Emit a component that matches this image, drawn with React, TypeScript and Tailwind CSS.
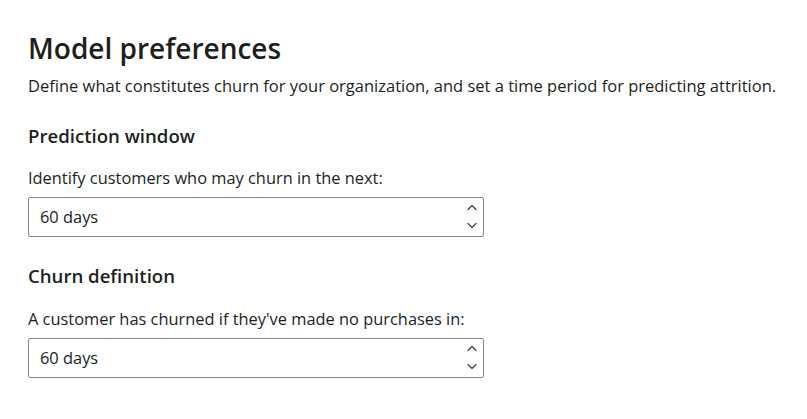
import React from "react";

function Chevrons() {
  return (
    <svg width="10" height="26" viewBox="0 0 10 26" fill="none" stroke="#444" strokeWidth="1.3" strokeLinecap="round" strokeLinejoin="round">
      <path d="M1 5.5 L5 1.5 L9 5.5" />
      <path d="M1 19.5 L5 23.5 L9 19.5" />
    </svg>
  );
}

function SelectBox({ value }: { value: string }) {
  return (
    <div className="w-[456px] h-[40px] border border-[#8a8886] rounded-[2px] flex items-center justify-between pl-[11px] pr-[6px] bg-white">
      <span className="text-[16.4px] text-[#201f1e]">{value}</span>
      <Chevrons />
    </div>
  );
}

export default function App() {
  return (
    <div className="w-[807px] h-[419px] bg-white pl-[28px] pt-[28px]" style={{ fontFamily: '"Open Sans", "Noto Sans", sans-serif' }}>
      <h1 className="text-[28px] font-semibold text-[#201f1e] leading-[40px]">Model preferences</h1>
      <p className="text-[16.5px] text-[#201f1e] leading-[22px] mt-[7px] whitespace-nowrap">
        Define what constitutes churn for your organization, and set a time period for predicting attrition.
      </p>
      <h2 className="text-[18.6px] font-semibold text-[#201f1e] leading-[24px] mt-[27px]">Prediction window</h2>
      <p className="text-[16.4px] text-[#201f1e] leading-[22px] mt-[19px]">Identify customers who may churn in the next:</p>
      <div className="mt-[8px]">
        <SelectBox value="60 days" />
      </div>
      <h2 className="text-[18.6px] font-semibold text-[#201f1e] leading-[24px] mt-[27px]">Churn definition</h2>
      <p className="text-[16.4px] text-[#201f1e] leading-[22px] mt-[20px]">A customer has churned if they've made no purchases in:</p>
      <div className="mt-[8px]">
        <SelectBox value="60 days" />
      </div>
    </div>
  );
}
